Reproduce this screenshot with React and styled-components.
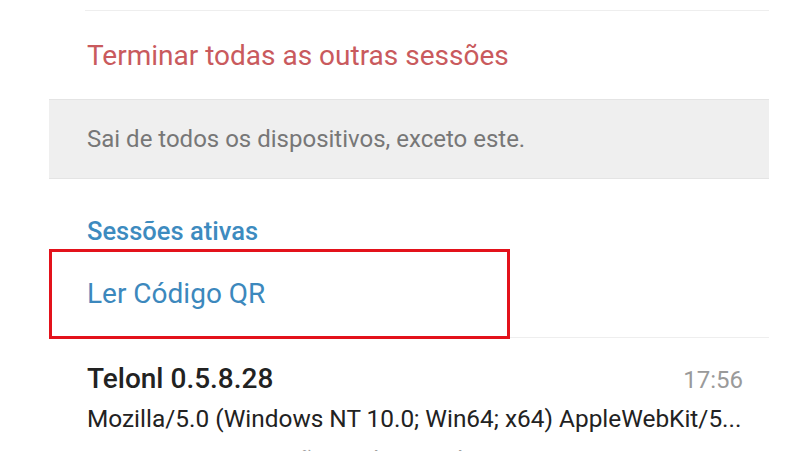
import React from "react";
import styled, { createGlobalStyle } from "styled-components";

const GlobalStyle = createGlobalStyle`
    html, body {
        margin: 0;
        padding: 0;
        background: #ffffff;
        overflow: hidden;
    }
    body {
        font-family: Roboto, "Noto Sans", sans-serif;
    }
`;

const sessions = [
    {
        id: 1,
        app: "Telonl 0.5.8.28",
        time: "17:56",
        agent: "Mozilla/5.0 (Windows NT 10.0; Win64; x64) AppleWebKit/5...",
        place: "187.19.244.132 — São Paulo, Brasil",
    },
];

const App = () => {
    return (
        <>
            <GlobalStyle />
            <Page>
                <SettingsColumn>
                    <Divider />
                    <ActionRow $color="#c95a5d">Terminar todas as outras sessões</ActionRow>
                    <InfoBox>Sai de todos os dispositivos, exceto este.</InfoBox>
                    <SectionHeader>Sessões ativas</SectionHeader>
                    <QrRow>
                        <ActionRow $color="#3c88bd">Ler Código QR</ActionRow>
                        <Highlight />
                    </QrRow>
                    <Divider />
                    {sessions.map((s) => (
                        <SessionItem key={s.id}>
                            <SessionTop>
                                <SessionApp>{s.app}</SessionApp>
                                <SessionTime>{s.time}</SessionTime>
                            </SessionTop>
                            <SessionAgent>{s.agent}</SessionAgent>
                            <SessionPlace>{s.place}</SessionPlace>
                        </SessionItem>
                    ))}
                </SettingsColumn>
            </Page>
        </>
    );
};

const Page = styled.div`
    width: 800px;
    height: 451px;
    padding-top: 10px;
    box-sizing: border-box;
`;

const SettingsColumn = styled.div`
    margin-left: 49px;
    width: 720px;
    display: flex;
    flex-direction: column;
`;

const Divider = styled.div`
    height: 1px;
    margin-left: 36px;
    background-color: #eeeeee;
`;

const ActionRow = styled.div`
    height: 88px;
    display: flex;
    align-items: center;
    padding-left: 38px;
    font-size: 28px;
    color: ${(p) => p.$color};
`;

const InfoBox = styled.div`
    height: 78px;
    display: flex;
    align-items: center;
    padding-left: 38px;
    background-color: #efefef;
    border-top: 1px solid #e4e4e4;
    border-bottom: 1px solid #e4e4e4;
    font-size: 24px;
    color: #777777;
`;

const SectionHeader = styled.div`
    height: 70px;
    padding: 37px 0 0 38px;
    box-sizing: border-box;
    font-size: 25.5px;
    line-height: 30px;
    font-weight: 500;
    color: #3d8bbf;
`;

const QrRow = styled.div`
    position: relative;
`;

const Highlight = styled.div`
    position: absolute;
    left: 0;
    top: 0;
    width: 461px;
    height: 90px;
    box-sizing: border-box;
    border: 3px solid #e3121b;
    pointer-events: none;
`;

const SessionItem = styled.div`
    display: flex;
    flex-direction: column;
    padding: 23px 26px 0 38px;
`;

const SessionTop = styled.div`
    display: flex;
    justify-content: space-between;
    align-items: baseline;
    line-height: 36px;
`;

const SessionApp = styled.span`
    font-size: 28px;
    font-weight: 500;
    color: #222222;
`;

const SessionTime = styled.span`
    font-size: 24px;
    color: #9a9a9a;
`;

const SessionAgent = styled.div`
    margin-top: 2px;
    font-size: 24.4px;
    line-height: 38px;
    color: #222222;
    white-space: nowrap;
`;

const SessionPlace = styled.div`
    margin-top: 3px;
    font-size: 24px;
    line-height: 38px;
    color: #a0a0a0;
    white-space: nowrap;
`;

export default App;
